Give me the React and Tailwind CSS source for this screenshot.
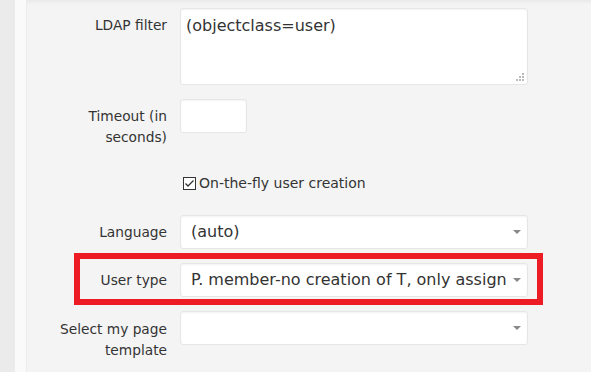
import React from 'react'

const font = { fontFamily: '"DejaVu Sans", Verdana, sans-serif' }

const Arrow = () => (
  <svg width="8" height="4" viewBox="0 0 8 4" className="absolute right-[6px] top-1/2 -translate-y-1/2">
    <path d="M0 0 H8 L4 4 Z" fill="#888" />
  </svg>
)

const Select = ({ value }) => (
  <div className="relative h-[34px] w-[348px] rounded-[3px] border border-[#e6e6e6] bg-white shadow-[inset_0_1px_2px_rgba(0,0,0,0.05)]">
    <div className="ml-[10px] mr-[19px] overflow-hidden whitespace-nowrap text-[16px] leading-[32px] text-[#333]">
      {value}
    </div>
    <Arrow />
  </div>
)

const Label = ({ children, className = '' }) => (
  <div className={`w-[140px] shrink-0 text-right text-[13.75px] leading-[21px] text-[#333] ${className}`}>
    {children}
  </div>
)

const App = () => {
  return (
    <div style={font} className="flex h-[372px] w-[591px] overflow-hidden bg-[#f4f4f4]">
      <div className="w-[15px] shrink-0 bg-[#ebebeb]" />
      <div className="w-[12px] shrink-0 border-r border-[#ececec] bg-[#fafafa]" />
      <div className="flex flex-1 flex-col shadow-[inset_0_4px_4px_-3px_rgba(0,0,0,0.07)]">
        <div className="mt-[8px] flex gap-[13px]">
          <Label className="pt-[7px]">LDAP filter</Label>
          <div className="relative h-[77px] w-[348px] rounded-[3px] border border-[#e6e6e6] bg-white px-[5px] pt-[6px] text-[16px] leading-[22px] text-[#333] shadow-[inset_0_1px_2px_rgba(0,0,0,0.05)]">
            (objectclass=user)
            <svg width="9" height="9" viewBox="0 0 9 9" className="absolute bottom-[2px] right-[2px]">
              <g fill="#bbb">
                <rect x="6" y="0" width="2" height="2" />
                <rect x="3" y="3" width="2" height="2" />
                <rect x="6" y="3" width="2" height="2" />
                <rect x="0" y="6" width="2" height="2" />
                <rect x="3" y="6" width="2" height="2" />
                <rect x="6" y="6" width="2" height="2" />
              </g>
            </svg>
          </div>
        </div>

        <div className="mt-[14px] flex gap-[13px]">
          <Label className="pt-[7px]">
            Timeout (in
            <br />
            seconds)
          </Label>
          <div className="h-[34px] w-[67px] rounded-[3px] border border-[#e6e6e6] bg-white shadow-[inset_0_1px_2px_rgba(0,0,0,0.05)]" />
        </div>

        <div className="mt-[25px] flex items-center pl-[156px] text-[14px] leading-[21px] text-[#333]">
          <svg width="13" height="13" viewBox="0 0 13 13" className="mr-[3px]">
            <rect x="0.5" y="0.5" width="12" height="12" fill="#fff" stroke="#333" />
            <path d="M2.5 6.5 L5 9 L10.5 3.5" fill="none" stroke="#333" strokeWidth="1.3" />
          </svg>
          On-the-fly user creation
        </div>

        <div className="mt-[21px] flex items-center gap-[13px]">
          <Label>Language</Label>
          <Select value="(auto)" />
        </div>

        <div className="relative mt-[14px] flex items-center gap-[13px]">
          <Label>User type</Label>
          <Select value="P. member-no creation of T, only assign T. to existing users" />
          <div className="absolute left-[47px] top-[-10px] h-[52px] w-[469px] border-[6px] border-[#ed1c24]" />
        </div>

        <div className="mt-[14px] flex gap-[13px]">
          <Label className="pt-[8px]">
            Select my page
            <br />
            template
          </Label>
          <Select value="" />
        </div>
      </div>
    </div>
  )
}

export default App
